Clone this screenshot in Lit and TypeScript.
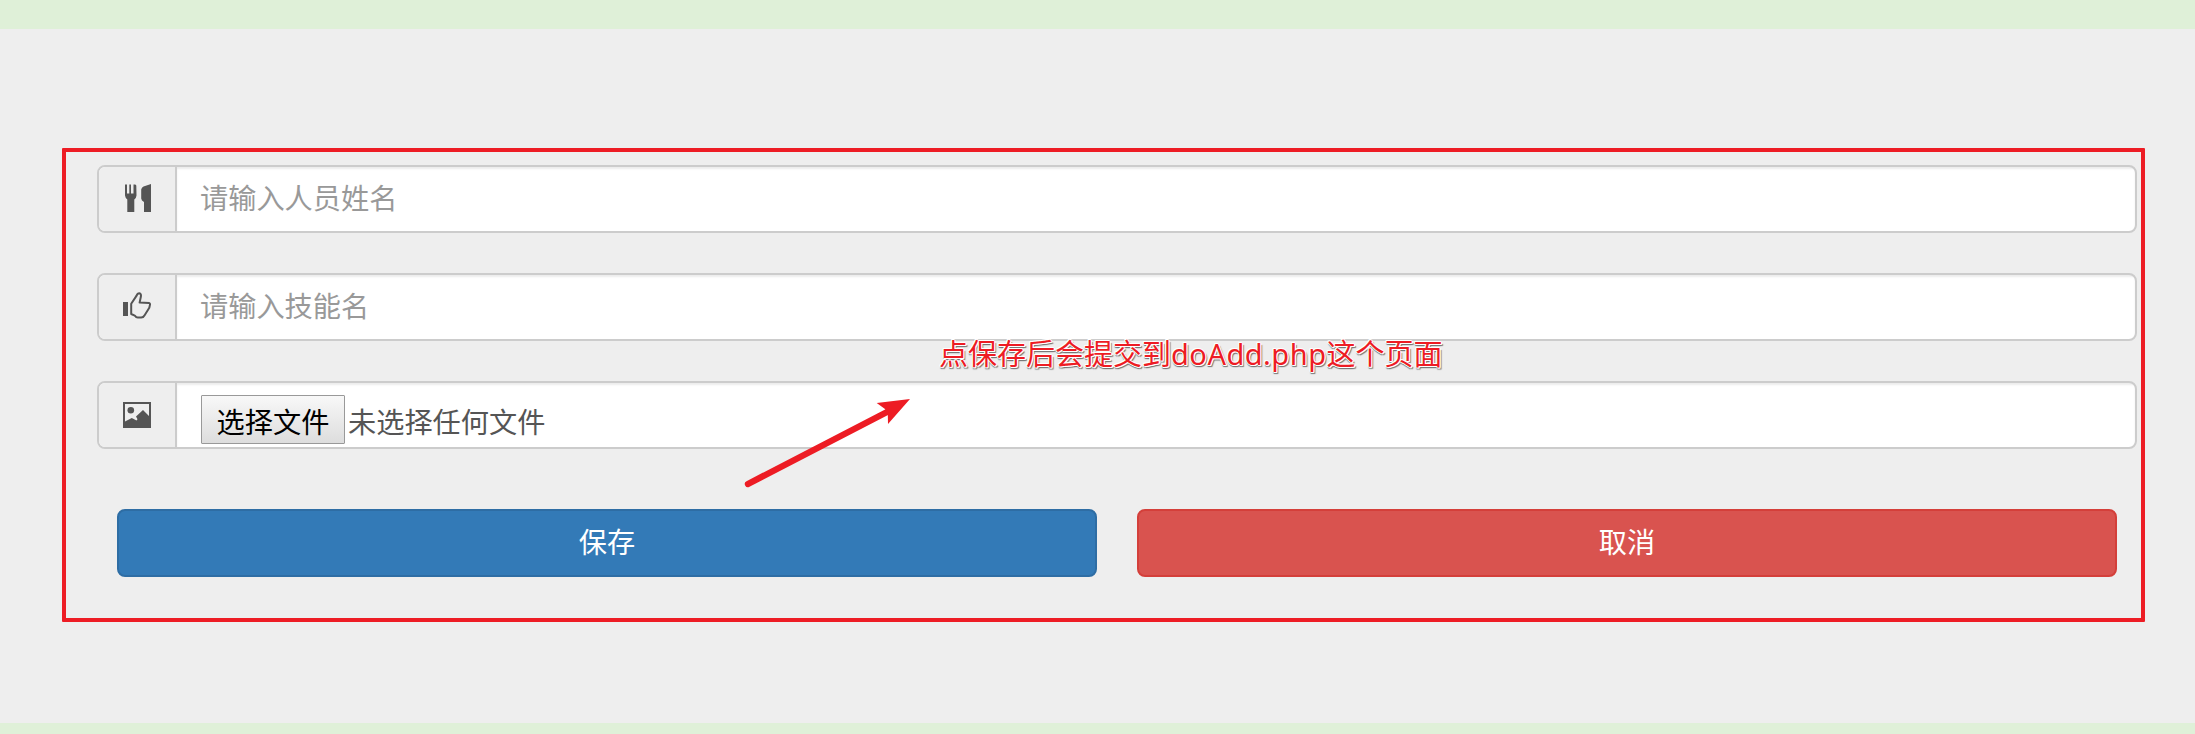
import { LitElement, html, css, svg } from "lit";
import { customElement } from "lit/decorators.js";

const icons = {
  cutlery: svg`<path d="M2 0.5 L4 0.5 L4 9.5 L6.3 9.5 L6.3 0.5 L8 0.5 L8 9.5 L10.5 9.5 L10.5 0.5 L12.3 0.5 L13.3 1.5 L13.5 11.5 Q13.3 14 11.3 15.5 L11.3 28 L4.3 28 L4.3 15.5 Q2.3 14 2 11.5 Z M28 0 L28 28 L21 28 L21 18 Q18.4 16.5 18.2 14.5 L18.2 5.5 Q18.6 3.5 20.5 2.6 Z"/>`,
  thumb: svg`<path d="M0 10 H5 V24 H0 Z"/><path d="M8.2 11.8 L13.6 3.6 Q14.4 1.3 16.3 1.3 Q18.5 1.5 17.8 5 L16.6 10.6 L26 10.9 Q27.2 11.2 27 12.6 L26.3 15.8 L21.6 23.2 Q20.4 25.5 18.2 25.6 L14.8 25.6 Q13.2 25.4 11.8 23.6 L8.2 22 Z" fill="none" stroke="#555" stroke-width="2" stroke-linejoin="round"/>`,
  picture: svg`<path fill-rule="evenodd" d="M0 2 H28 V28 H0 Z M2 4 V21.5 L8.8 18 L13.5 20.5 L14.5 19.3 L13 16.5 L20 10 L26 16 V4 Z"/><circle cx="7.8" cy="10.3" r="3.3"/>`,
};

@customElement("app-root")
export class AppRoot extends LitElement {
  static styles = css`
    :host { display: block; font-family: "Noto Sans CJK SC", sans-serif; font-size: 28.2px; line-height: 40px; color: #555; }
    * { box-sizing: border-box; }
    .page { position: relative; height: 734px; padding: 29px 0 11px; background: #dff0d8; overflow: hidden; }
    .panel { height: 694px; background: #eee; padding: 119px 50px 0 62px; }
    .form { height: 474px; border: 4px solid #ed1c24; border-radius: 1px; padding: 13px 4px 0 31px; display: flex; flex-direction: column; gap: 40px; }
    .group { display: flex; height: 68px; border: 2px solid #ccc; border-radius: 8px; background: #fff; overflow: hidden; flex: none; }
    .addon { width: 78px; flex: none; background: #eee; border-right: 2px solid #ccc; padding: 17px 0 0 24px; }
    .addon svg { display: block; width: 28px; height: 28px; fill: #555; }
    .control { flex: 1; display: flex; align-items: flex-start; padding: 10px 24px; box-shadow: inset 0 2px 2px rgba(0,0,0,.075); }
    .placeholder { color: #999; padding-left: 23px; }
    .file { padding-top: 12px; gap: 3px; line-height: 51px; }
    .choose { width: 144px; height: 49px; line-height: 49px; text-align: center; border: 1px solid #999; border-radius: 1px; background: linear-gradient(#f8f8f8, #ddd); color: #000; }
    .actions { display: flex; gap: 40px; padding: 20px 20px 0; }
    .btn { flex: 1; height: 68px; border: 2px solid; border-radius: 8px; color: #fff; text-align: center; padding-top: 10px; }
    .primary { background: #337ab7; border-color: #2e6da4; }
    .danger { background: #d9534f; border-color: #d43f3a; }
    .note { position: absolute; left: 939px; top: 332px; white-space: nowrap; color: #ed1c24; font-size: 29px;
      text-shadow: -1px 0 #fff, 1px 0 #fff, 0 -1px #fff, 0 1px #fff, 1px 1px #fff, -1px -1px #fff, 2px 2px 1px #777, 0 2px 1px #777; }
    .latin { font-family: "Noto Sans", sans-serif; letter-spacing: .5px; }
    .arrow { position: absolute; left: 740px; top: 390px; width: 180px; height: 105px; }
  `;

  private group(icon: unknown, control: unknown) {
    return html`<div class="group"><div class="addon"><svg viewBox="0 0 28 28">${icon}</svg></div>${control}</div>`;
  }

  render() {
    return html`<div class="page">
      <div class="panel">
        <div class="form">
          ${this.group(icons.cutlery, html`<div class="control placeholder">请输入人员姓名</div>`)}
          ${this.group(icons.thumb, html`<div class="control placeholder">请输入技能名</div>`)}
          ${this.group(icons.picture, html`<div class="control file"><div class="choose">选择文件</div><span>未选择任何文件</span></div>`)}
          <div class="actions">
            <div class="btn primary">保存</div>
            <div class="btn danger">取消</div>
          </div>
        </div>
      </div>
      <div class="note">点保存后会提交到<span class="latin">doAdd.php</span>这个页面</div>
      <svg class="arrow" viewBox="740 390 180 105">
        <path d="M748 484 L889 411" stroke="#ed1c24" stroke-width="6.4" stroke-linecap="round"/>
        <path d="M910 399 L876.7 403 L885 409 L887.8 414 L888 424 Z" fill="#ed1c24"/>
      </svg>
    </div>`;
  }
}
